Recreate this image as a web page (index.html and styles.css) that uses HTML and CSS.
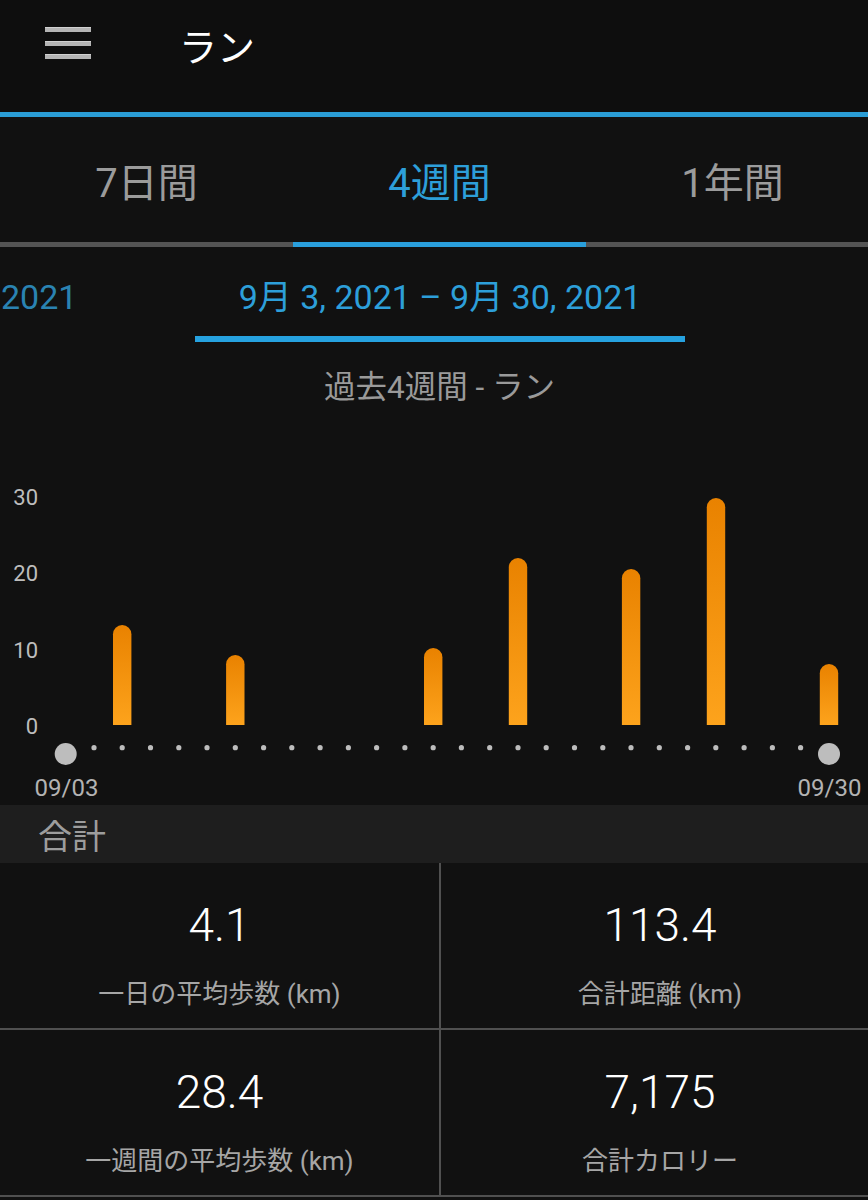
FILE: index.html
```html
<!DOCTYPE html>
<html lang="ja">
<head>
<meta charset="utf-8">
<title>ラン</title>
<link rel="stylesheet" href="styles.css">
</head>
<body>
<div class="app">
  <header class="topbar">
    <div class="menu" aria-label="menu"><span></span><span></span><span></span></div>
    <h1 class="title">ラン</h1>
  </header>

  <nav class="tabs">
    <div class="tab">7日間</div>
    <div class="tab active">4週間</div>
    <div class="tab">1年間</div>
  </nav>

  <div class="daterow">
    <div class="date-prev">2021</div>
    <div class="date-current">9月 3, 2021 – 9月 30, 2021</div>
    <div class="date-next"></div>
  </div>

  <div class="subtitle">過去4週間 - ラン</div>

  <svg class="chart" width="879" height="397" viewBox="0 0 879 397">
    <defs>
      <linearGradient id="barfill" x1="0" y1="0" x2="0" y2="1">
        <stop offset="0" stop-color="#e98200"/>
        <stop offset="1" stop-color="#fda31c"/>
      </linearGradient>
    </defs>
    <g class="axis">
      <text x="38" y="97">30</text>
      <text x="38" y="173">20</text>
      <text x="38" y="249.5">10</text>
      <text x="38" y="325.5">0</text>
    </g>
    <g class="bars" fill="url(#barfill)">
      <path d="M113 317 V226.2 A9.2 9.2 0 0 1 131.4 226.2 V317 Z"/>
      <path d="M226.1 317 V256.2 A9.2 9.2 0 0 1 244.5 256.2 V317 Z"/>
      <path d="M424 317 V249.2 A9.2 9.2 0 0 1 442.4 249.2 V317 Z"/>
      <path d="M508.8 317 V159.2 A9.2 9.2 0 0 1 527.2 159.2 V317 Z"/>
      <path d="M621.9 317 V170.2 A9.2 9.2 0 0 1 640.3 170.2 V317 Z"/>
      <path d="M706.8 317 V99.2 A9.2 9.2 0 0 1 725.2 99.2 V317 Z"/>
      <path d="M819.8 317 V265.2 A9.2 9.2 0 0 1 838.2 265.2 V317 Z"/>
    </g>
    <g class="dots" fill="#bdbdbd">
      <circle cx="65.7" cy="346" r="11"/>
      <circle cx="94" cy="339.7" r="2.6"/>
      <circle cx="122.2" cy="339.7" r="2.6"/>
      <circle cx="150.5" cy="339.7" r="2.6"/>
      <circle cx="178.8" cy="339.7" r="2.6"/>
      <circle cx="207" cy="339.7" r="2.6"/>
      <circle cx="235.3" cy="339.7" r="2.6"/>
      <circle cx="263.6" cy="339.7" r="2.6"/>
      <circle cx="291.8" cy="339.7" r="2.6"/>
      <circle cx="320.1" cy="339.7" r="2.6"/>
      <circle cx="348.4" cy="339.7" r="2.6"/>
      <circle cx="376.6" cy="339.7" r="2.6"/>
      <circle cx="404.9" cy="339.7" r="2.6"/>
      <circle cx="433.2" cy="339.7" r="2.6"/>
      <circle cx="461.4" cy="339.7" r="2.6"/>
      <circle cx="489.7" cy="339.7" r="2.6"/>
      <circle cx="518" cy="339.7" r="2.6"/>
      <circle cx="546.2" cy="339.7" r="2.6"/>
      <circle cx="574.5" cy="339.7" r="2.6"/>
      <circle cx="602.8" cy="339.7" r="2.6"/>
      <circle cx="631" cy="339.7" r="2.6"/>
      <circle cx="659.3" cy="339.7" r="2.6"/>
      <circle cx="687.6" cy="339.7" r="2.6"/>
      <circle cx="715.8" cy="339.7" r="2.6"/>
      <circle cx="744.1" cy="339.7" r="2.6"/>
      <circle cx="772.4" cy="339.7" r="2.6"/>
      <circle cx="800.6" cy="339.7" r="2.6"/>
      <circle cx="829" cy="346" r="11"/>
    </g>
    <g class="dates">
      <text x="66.5" y="387.5">09/03</text>
      <text x="829.5" y="387.5">09/30</text>
    </g>
  </svg>

  <div class="section-head">合計</div>

  <div class="stats">
    <div class="cell">
      <div class="value">4.1</div>
      <div class="label">一日の平均歩数 (km)</div>
    </div>
    <div class="cell">
      <div class="value">113.4</div>
      <div class="label">合計距離 (km)</div>
    </div>
    <div class="cell">
      <div class="value">28.4</div>
      <div class="label">一週間の平均歩数 (km)</div>
    </div>
    <div class="cell">
      <div class="value">7,175</div>
      <div class="label">合計カロリー</div>
    </div>
  </div>
</div>
</body>
</html>
```

FILE: styles.css
```css
* { box-sizing: border-box; }

html, body {
  margin: 0;
  padding: 0;
  background: #111111;
  overflow: hidden;
}

body {
  font-family: Roboto, "Noto Sans CJK JP", sans-serif;
  color: #ffffff;
}

.app {
  width: 879px;
  background: #111111;
}

/* header */
.topbar {
  height: 117px;
  background: #0e0e0e;
  border-bottom: 5px solid #2a9dd6;
  display: flex;
  align-items: flex-start;
  padding: 27px 0 0 45px;
  gap: 88px;
}

.menu {
  width: 46px;
  display: flex;
  flex-direction: column;
  gap: 8.5px;
}

.menu span {
  display: block;
  height: 5px;
  background: #b4b4b4;
  border-top: 1px solid #d0d0d0;
}

.title {
  margin: 0;
  font-family: "Noto Sans CJK JP", sans-serif;
  font-weight: 400;
  font-size: 38px;
  line-height: 36px;
  color: #ffffff;
}

/* tabs */
.tabs {
  display: flex;
}

.tab {
  width: 293px;
  height: 130px;
  padding-top: 1px;
  display: flex;
  align-items: center;
  justify-content: center;
  font-size: 40px;
  color: #9b9b9b;
  border-bottom: 5px solid #545454;
}

.tab.active {
  color: #2d9fd9;
  border-bottom-color: #2a9fdc;
}

/* date carousel */
.daterow {
  display: grid;
  grid-template-columns: 195px 490px 1fr;
  height: 95px;
}

.date-prev,
.date-current {
  height: 95px;
  padding-top: 5px;
  display: flex;
  align-items: center;
  white-space: nowrap;
  font-size: 34px;
}

.date-prev {
  justify-content: flex-start;
  padding-left: 1px;
  color: #2a83b2;
}

.date-current {
  justify-content: center;
  color: #2d9fd9;
  border-bottom: 6px solid #26a2e0;
}

/* subtitle */
.subtitle {
  margin-top: 26px;
  height: 40px;
  line-height: 40px;
  text-align: center;
  font-size: 31.5px;
  color: #9a9a9a;
}

/* chart */
.chart {
  display: block;
}

.axis text {
  font-family: Roboto, sans-serif;
  font-size: 22px;
  fill: #bdbdbd;
  text-anchor: end;
}

.dates text {
  font-family: Roboto, sans-serif;
  font-size: 24px;
  fill: #b3b3b3;
  text-anchor: middle;
}

/* totals */
.section-head {
  height: 58px;
  background: #1e1e1e;
  padding-left: 38px;
  display: flex;
  align-items: center;
  font-family: "Noto Sans CJK JP", sans-serif;
  font-size: 34px;
  color: #9d9d9d;
}

.stats {
  display: grid;
  grid-template-columns: 439px 1fr;
  grid-auto-rows: 165px;
  gap: 2px;
  background: #505050;
  border-bottom: 2px solid #505050;
}

.cell {
  background: #111111;
  padding-top: 37px;
  display: flex;
  flex-direction: column;
  align-items: center;
}

.value {
  font-size: 46px;
  font-weight: 300;
  line-height: 50px;
  color: #ffffff;
}

.label {
  margin-top: 28px;
  font-size: 26px;
  line-height: 32px;
  color: #a6a6a6;
}
```
